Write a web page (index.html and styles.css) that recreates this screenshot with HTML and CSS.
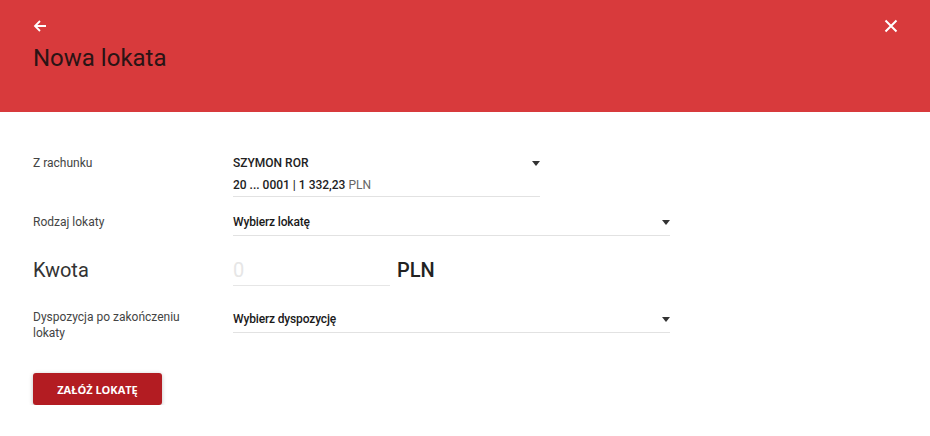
FILE: index.html
```html
<!DOCTYPE html>
<html lang="pl">
<head>
<meta charset="utf-8">
<title>Nowa lokata</title>
<link rel="stylesheet" href="styles.css">
</head>
<body>
<header class="header">
  <div class="header-top">
    <svg class="back" width="14" height="14" viewBox="0 0 14 14"><path d="M13 7H2.5M7 2L2 7l5 5" fill="none" stroke="#fff" stroke-width="1.8"/></svg>
    <svg class="close" width="14" height="14" viewBox="0 0 14 14"><path d="M1.5 1.5l11 11M12.5 1.5l-11 11" fill="none" stroke="#fff" stroke-width="2"/></svg>
  </div>
  <h1 class="title">Nowa lokata</h1>
</header>
<main class="form">
  <div class="row row-account">
    <div class="label">Z rachunku</div>
    <div class="field field-short">
      <div class="value strong">SZYMON ROR</div>
      <div class="value"><span class="strong">20 ... 0001 | 1 332,23</span> <span class="muted">PLN</span></div>
      <span class="caret"></span>
    </div>
  </div>
  <div class="row row-type">
    <div class="label">Rodzaj lokaty</div>
    <div class="field field-long">
      <div class="value choice">Wybierz lokatę</div>
      <span class="caret"></span>
    </div>
  </div>
  <div class="row row-amount">
    <div class="label big">Kwota</div>
    <div class="amount">
      <div class="amount-input">0</div>
      <div class="currency">PLN</div>
    </div>
  </div>
  <div class="row row-disp">
    <div class="label two-line">Dyspozycja po zakończeniu<br>lokaty</div>
    <div class="field field-long">
      <div class="value choice">Wybierz dyspozycję</div>
      <span class="caret"></span>
    </div>
  </div>
  <button class="submit">ZAŁÓŻ LOKATĘ</button>
</main>
</body>
</html>
```
FILE: styles.css
```css
* { box-sizing: border-box; }
body {
  margin: 0;
  background: #fff;
  font-family: Roboto, "Liberation Sans", sans-serif;
  color: #333;
}
.header {
  height: 112px;
  background: #d83a3c;
  padding: 19px 31px 0 33px;
}
.header-top {
  display: flex;
  justify-content: space-between;
  height: 14px;
}
.close { margin-right: 1px; }
.title {
  margin: 9px 0 0;
  font-size: 24px;
  line-height: 32px;
  font-weight: 400;
  color: #2a1415;
}
.form {
  padding: 40px 0 0 33px;
  display: flex;
  flex-direction: column;
  align-items: flex-start;
}
.row {
  display: grid;
  grid-template-columns: 200px auto;
  align-items: start;
}
.label {
  font-size: 12px;
  line-height: 22px;
  color: #444;
}
.label.big {
  font-size: 20px;
  line-height: 28px;
  color: #333;
}
.label.two-line {
  line-height: 16px;
  padding-top: 1px;
}
.field {
  position: relative;
  border-bottom: 1px solid #e2e2e2;
  padding-bottom: 2px;
}
.field-short { width: 307px; padding-bottom: 0; }
.field-long { width: 437px; }
.value {
  font-size: 12px;
  line-height: 22px;
  color: #222;
}
.strong { font-weight: 500; color: #222; }
.choice { font-weight: 500; color: #1a1a1a; letter-spacing: -0.15px; }
.muted { color: #666; font-weight: 400; }
.caret {
  position: absolute;
  right: 0;
  top: 9px;
  width: 0;
  height: 0;
  border-left: 4.5px solid transparent;
  border-right: 4.5px solid transparent;
  border-top: 5px solid #333;
}
.row-type { margin-top: 14px; }
.row-amount { margin-top: 20px; }
.row-disp { margin-top: 22px; }
.amount {
  display: flex;
  align-items: flex-start;
  gap: 7px;
}
.amount-input {
  width: 157px;
  height: 30px;
  border-bottom: 1px solid #e6e6e6;
  font-size: 20px;
  line-height: 28px;
  color: #e6e6e6;
}
.currency {
  font-size: 20px;
  line-height: 28px;
  font-weight: 500;
  color: #222;
}
.submit {
  margin-top: 32px;
  width: 129px;
  height: 32px;
  border: none;
  border-radius: 3px;
  background: #b31c22;
  color: #fff;
  font-family: "Open Sans", "Liberation Sans", sans-serif;
  font-size: 11px;
  font-weight: 700;
  box-shadow: 0 1px 4px rgba(0,0,0,0.25);
  padding: 0;
}
```
